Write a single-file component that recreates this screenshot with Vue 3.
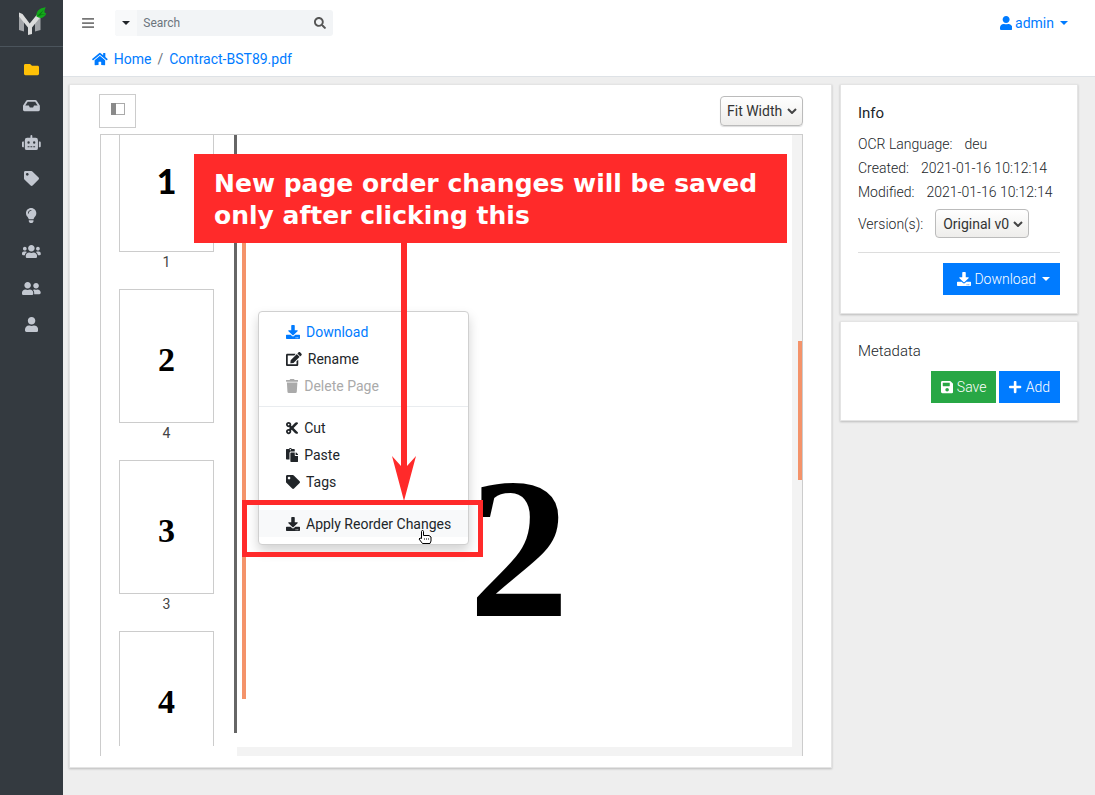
<script setup>
import { ref } from 'vue'

const icons = {
  folder: [512, 'M464 128H272l-64-64H48C21.49 64 0 85.49 0 112v288c0 26.51 21.49 48 48 48h416c26.51 0 48-21.49 48-48V176c0-26.51-21.49-48-48-48z'],
  inbox: [576, 'M567.938 243.908L462.25 85.374A48.003 48.003 0 0 0 422.311 64H153.689a48 48 0 0 0-39.938 21.374L8.062 243.908A47.994 47.994 0 0 0 0 270.533V400c0 26.51 21.49 48 48 48h480c26.51 0 48-21.49 48-48V270.533a47.994 47.994 0 0 0-8.062-26.625zM162.252 128h251.497l85.333 128H376l-32 64H232l-32-64H76.918l85.334-128z'],
  robot: [640, 'M32 224H64V416H32A32 32 0 0 1 0 384V256A32 32 0 0 1 32 224Zm512-48V448a64 64 0 0 1-64 64H160a64 64 0 0 1-64-64V176a80 80 0 0 1 80-80H288V32a32 32 0 0 1 64 0V96H464A80 80 0 0 1 544 176ZM264 256a40 40 0 1 0-40 40A40 40 0 0 0 264 256Zm-8 128H192v32h64Zm96 0H288v32h64ZM456 256a40 40 0 1 0-40 40A40 40 0 0 0 456 256Zm-8 128H384v32h64ZM640 256V384a32 32 0 0 1-32 32H576V224h32A32 32 0 0 1 640 256Z'],
  tag: [512, 'M0 252.118V48C0 21.49 21.49 0 48 0h204.118a48 48 0 0 1 33.941 14.059l211.882 211.882c18.745 18.745 18.745 49.137 0 67.882L293.823 497.941c-18.745 18.745-49.137 18.745-67.882 0L14.059 286.059A48 48 0 0 1 0 252.118zM112 64c-26.51 0-48 21.49-48 48s21.49 48 48 48 48-21.49 48-48-21.49-48-48-48z'],
  bulb: [352, 'M96.06 454.35c.01 6.29 1.87 12.45 5.36 17.69l17.09 25.69a31.99 31.99 0 0 0 26.64 14.28h61.71a31.99 31.99 0 0 0 26.64-14.28l17.09-25.69a31.989 31.989 0 0 0 5.36-17.69l.04-38.35H96.01l.05 38.35zM0 176c0 44.37 16.45 84.85 43.56 115.78 16.52 18.85 42.36 58.23 52.21 91.45.04.26.07.52.11.78h160.24c.04-.26.07-.51.11-.78 9.85-33.22 35.69-72.6 52.21-91.45C335.55 260.85 352 220.37 352 176 352 78.61 272.91-.3 175.45 0 73.44.31 0 82.97 0 176zm176-80c-44.11 0-80 35.89-80 80 0 8.84-7.16 16-16 16s-16-7.16-16-16c0-61.76 50.24-112 112-112 8.84 0 16 7.16 16 16s-7.16 16-16 16z'],
  users: [640, 'M96 224c35.3 0 64-28.7 64-64s-28.7-64-64-64-64 28.7-64 64 28.7 64 64 64zm448 0c35.3 0 64-28.7 64-64s-28.7-64-64-64-64 28.7-64 64 28.7 64 64 64zm32 32h-64c-17.6 0-33.5 7.1-45.1 18.6 40.3 22.1 68.9 62 75.1 109.4h66c17.7 0 32-14.3 32-32v-32c0-35.3-28.7-64-64-64zm-256 0c61.9 0 112-50.1 112-112S381.9 32 320 32 208 82.1 208 144s50.1 112 112 112zm76.8 32h-8.3c-20.8 10-43.9 16-68.5 16s-47.6-6-68.5-16h-8.3C179.6 288 128 339.6 128 403.2V432c0 26.5 21.5 48 48 48h288c26.5 0 48-21.5 48-48v-28.8c0-63.6-51.6-115.2-115.2-115.2zm-223.7-13.4C161.5 263.1 145.6 256 128 256H64c-35.3 0-64 28.7-64 64v32c0 17.7 14.3 32 32 32h65.9c6.3-47.4 34.9-87.3 75.2-109.4z'],
  friends: [640, 'M192 256c61.9 0 112-50.1 112-112S253.9 32 192 32 80 82.1 80 144s50.1 112 112 112zm76.8 32h-8.3c-20.8 10-43.9 16-68.5 16s-47.6-6-68.5-16h-8.3C51.6 288 0 339.6 0 403.2V432c0 26.5 21.5 48 48 48h288c26.5 0 48-21.5 48-48v-28.8c0-63.6-51.6-115.2-115.2-115.2zM480 256c53 0 96-43 96-96s-43-96-96-96-96 43-96 96 43 96 96 96zm48 32h-3.8c-13.9 4.8-28.6 8-44.2 8s-30.3-3.2-44.2-8H432c-20.4 0-39.2 5.9-55.7 15.4 24.4 26.3 39.7 61.2 39.7 99.8v38.4c0 2.2-.5 4.3-.6 6.4H592c26.5 0 48-21.5 48-48 0-61.9-50.1-112-112-112z'],
  user: [448, 'M224 256c70.7 0 128-57.3 128-128S294.7 0 224 0 96 57.3 96 128s57.3 128 128 128zm89.6 32h-16.7c-22.2 10.2-46.9 16-72.9 16s-50.6-5.8-72.9-16h-16.7C60.2 288 0 348.2 0 422.4V464c0 26.5 21.5 48 48 48h352c26.5 0 48-21.5 48-48v-41.6c0-74.2-60.2-134.4-134.4-134.4z'],
  home: [576, 'M280.37 148.26L96 300.11V464a16 16 0 0 0 16 16l112.06-.29a16 16 0 0 0 15.92-16V368a16 16 0 0 1 16-16h64a16 16 0 0 1 16 16v95.64a16 16 0 0 0 16 16.05L464 480a16 16 0 0 0 16-16V300L295.67 148.26a12.19 12.19 0 0 0-15.3 0zM571.6 251.47L488 182.56V44.05a12 12 0 0 0-12-12h-56a12 12 0 0 0-12 12v72.61L318.47 43a48 48 0 0 0-61 0L4.34 251.47a12 12 0 0 0-1.6 16.9l25.5 31A12 12 0 0 0 45.15 301l235.22-193.74a12.19 12.19 0 0 1 15.3 0L530.9 301a12 12 0 0 0 16.9-1.6l25.5-31a12 12 0 0 0-1.7-16.93z'],
  search: [512, 'M505 442.7L405.3 343c-4.5-4.5-10.6-7-17-7H372c27.6-35.3 44-79.7 44-128C416 93.1 322.9 0 208 0S0 93.1 0 208s93.1 208 208 208c48.3 0 92.7-16.4 128-44v16.3c0 6.4 2.5 12.5 7 17l99.7 99.7c9.4 9.4 24.6 9.4 33.9 0l28.3-28.3c9.4-9.4 9.4-24.6.1-34zM208 336c-70.7 0-128-57.2-128-128 0-70.7 57.2-128 128-128 70.7 0 128 57.2 128 128 0 70.7-57.2 128-128 128z'],
  bars: [448, 'M16 76h416a16 16 0 0 1 16 16v30a16 16 0 0 1-16 16H16a16 16 0 0 1-16-16V92a16 16 0 0 1 16-16zM16 226h416a16 16 0 0 1 16 16v30a16 16 0 0 1-16 16H16a16 16 0 0 1-16-16v-30a16 16 0 0 1 16-16zM16 376h416a16 16 0 0 1 16 16v30a16 16 0 0 1-16 16H16a16 16 0 0 1-16-16v-30a16 16 0 0 1 16-16z'],
  download: [512, 'M216 0h80c13.3 0 24 10.7 24 24v168h87.7c17.8 0 26.7 21.5 14.1 34.1L269.7 378.3c-7.5 7.5-19.8 7.5-27.3 0L90.1 226.1c-12.6-12.6-3.7-34.1 14.1-34.1H192V24c0-13.3 10.7-24 24-24zm296 376v112c0 13.3-10.7 24-24 24H24c-13.3 0-24-10.7-24-24V376c0-13.3 10.7-24 24-24h146.7l49 49c20.1 20.1 52.5 20.1 72.6 0l49-49H488c13.3 0 24 10.7 24 24zm-124 88c0-11-9-20-20-20s-20 9-20 20 9 20 20 20 20-9 20-20zm64 0c0-11-9-20-20-20s-20 9-20 20 9 20 20 20 20-9 20-20z'],
  edit: [576, 'M402.6 83.2l90.2 90.2c3.8 3.8 3.8 10 0 13.8L274.4 405.6l-92.8 10.3c-12.4 1.4-22.9-9.1-21.5-21.5l10.3-92.8L388.8 83.2c3.8-3.8 10-3.8 13.8 0zm162-22.9l-48.8-48.8c-15.2-15.2-39.9-15.2-55.2 0l-35.4 35.4c-3.8 3.8-3.8 10 0 13.8l90.2 90.2c3.8 3.8 10 3.8 13.8 0l35.4-35.4c15.2-15.3 15.2-40 0-55.2zM384 346.2V448H64V128h229.8c3.2 0 6.2-1.3 8.5-3.5l40-40c7.6-7.6 2.2-20.5-8.5-20.5H48C21.5 64 0 85.5 0 112v352c0 26.5 21.5 48 48 48h352c26.5 0 48-21.5 48-48V306.2c0-10.7-12.9-16-20.5-8.5l-40 40c-2.2 2.3-3.5 5.3-3.5 8.5z'],
  trash: [448, 'M432 32H312l-9.4-18.7A24 24 0 0 0 281.1 0H166.8a23.72 23.72 0 0 0-21.4 13.3L136 32H16A16 16 0 0 0 0 48v32a16 16 0 0 0 16 16h416a16 16 0 0 0 16-16V48a16 16 0 0 0-16-16zM53.2 467a48 48 0 0 0 47.9 45h245.8a48 48 0 0 0 47.9-45L416 128H32z'],
  cut: [448, 'M278.06 256L444.48 89.57c4.69-4.69 4.69-12.29 0-16.97-32.8-32.8-85.99-32.8-118.79 0L210.18 188.12l-24.86-24.86c4.31-10.92 6.68-22.81 6.68-35.26 0-53.02-42.98-96-96-96S0 74.98 0 128s42.98 96 96 96c4.54 0 8.99-.32 13.36-.93L142.29 256l-32.93 32.93c-4.37-.61-8.83-.93-13.36-.93-53.02 0-96 42.98-96 96s42.98 96 96 96 96-42.98 96-96c0-12.45-2.37-24.34-6.68-35.26l24.86-24.86L325.69 439.4c32.8 32.8 85.99 32.8 118.79 0 4.69-4.68 4.69-12.28 0-16.97L278.06 256zM96 160c-17.64 0-32-14.36-32-32s14.36-32 32-32 32 14.36 32 32-14.36 32-32 32zm0 256c-17.64 0-32-14.36-32-32s14.36-32 32-32 32 14.36 32 32-14.36 32-32 32z'],
  paste: [448, 'M128 184c0-30.879 25.122-56 56-56h136V56c0-13.255-10.745-24-24-24h-80.61C204.306 12.89 183.637 0 160 0s-44.306 12.89-55.39 32H24C10.745 32 0 42.745 0 56v336c0 13.255 10.745 24 24 24h104V184zm32-144c13.255 0 24 10.745 24 24s-10.745 24-24 24-24-10.745-24-24 10.745-24 24-24zm184 248h104v200c0 13.255-10.745 24-24 24H184c-13.255 0-24-10.745-24-24V184c0-13.255 10.745-24 24-24h136v104c0 13.2 10.8 24 24 24zm104-38.059V256h-96v-96h6.059a24 24 0 0 1 16.97 7.029l65.941 65.941a24.002 24.002 0 0 1 7.03 16.971z'],
  save: [448, 'M433.941 129.941l-83.882-83.882A48 48 0 0 0 316.118 32H48C21.49 32 0 53.49 0 80v352c0 26.51 21.49 48 48 48h352c26.51 0 48-21.49 48-48V163.882a48 48 0 0 0-14.059-33.941zM224 416c-35.346 0-64-28.654-64-64 0-35.346 28.654-64 64-64s64 28.654 64 64c0 35.346-28.654 64-64 64zm96-304.52V212c0 6.627-5.373 12-12 12H76c-6.627 0-12-5.373-12-12V108c0-6.627 5.373-12 12-12h228.52c3.183 0 6.235 1.264 8.485 3.515l3.48 3.48A11.996 11.996 0 0 1 320 111.48z'],
  plus: [448, 'M416 208H272V64c0-17.67-14.33-32-32-32h-32c-17.67 0-32 14.33-32 32v144H32c-17.67 0-32 14.33-32 32v32c0 17.67 14.33 32 32 32h144v144c0 17.67 14.33 32 32 32h32c17.67 0 32-14.33 32-32V304h144c17.67 0 32-14.33 32-32v-32c0-17.67-14.33-32-32-32z'],
}
const box = (name) => `0 0 ${icons[name][0]} 512`

const nav = [
  { icon: 'folder', label: 'Documents', active: true },
  { icon: 'inbox', label: 'Inbox' },
  { icon: 'robot', label: 'Automates' },
  { icon: 'tag', label: 'Tags' },
  { icon: 'bulb', label: 'Logs' },
  { icon: 'users', label: 'Groups' },
  { icon: 'friends', label: 'Roles' },
  { icon: 'user', label: 'Users' },
]
const menu = [
  [
    { icon: 'download', label: 'Download', kind: 'primary' },
    { icon: 'edit', label: 'Rename' },
    { icon: 'trash', label: 'Delete Page', disabled: true },
  ],
  [
    { icon: 'cut', label: 'Cut' },
    { icon: 'paste', label: 'Paste' },
    { icon: 'tag', label: 'Tags' },
  ],
  [{ icon: 'download', label: 'Apply Reorder Changes', kind: 'hovered' }],
]
const thumbs = [
  { digit: '1', page: '1', sans: true },
  { digit: '2', page: '4' },
  { digit: '3', page: '3' },
  { digit: '4' },
]
const query = ref('')
const zoom = ref('Fit Width')
const version = ref('Original v0')
</script>

<template>
  <div class="app">
    <aside class="sidebar">
      <a class="brand" href="#" aria-label="Start page">
        <svg class="logo" viewBox="0 0 30 30">
          <path fill="#a2a5a9" d="M2 7l5 6v11.500L2 23zM18 13l5.500-6v16L18 24.500z" />
          <path fill="#dcdddd" d="M2 5.500l3.500 1.500 7.200 9.500L20 7.500l3.500-1v3.500L15 20.500V27l-4 1v-7.500L2 9.500z" />
          <path fill="#12a81a" d="M19.500 9.500c-.5-5 2.500-8.500 9.300-9.300-1.500 2.500-1.300 4.300-1.300 5.300l1.800 1.300c-2 4.500-6.500 5.200-9.800 2.700z" />
          <path fill="#0b7412" d="M20 9.300L27 2.500l-3.500 5 5.500-.5z" />
        </svg>
      </a>
      <nav class="nav">
        <a v-for="n in nav" :key="n.label" href="#" :class="{ active: n.active }" :aria-label="n.label">
          <svg class="icon nav-icon" :viewBox="box(n.icon)"><path :d="icons[n.icon][1]" /></svg>
        </a>
      </nav>
    </aside>

    <div class="body">
      <header class="header">
        <div class="topbar">
          <button class="plain burger" aria-label="Toggle sidebar">
            <svg class="icon" :viewBox="box('bars')"><path :d="icons.bars[1]" /></svg>
          </button>
          <form class="search" @submit.prevent>
            <button class="plain scope" type="button" aria-label="Search options"><span class="caret"></span></button>
            <input v-model="query" type="text" placeholder="Search" aria-label="Search" />
            <button class="plain go" aria-label="Run search">
              <svg class="icon" :viewBox="box('search')"><path :d="icons.search[1]" /></svg>
            </button>
          </form>
          <button class="plain account">
            <svg class="icon" :viewBox="box('user')"><path :d="icons.user[1]" /></svg>
            <span>admin</span><span class="caret"></span>
          </button>
        </div>
        <nav class="crumbs" aria-label="Breadcrumb">
          <a href="#"><svg class="icon" :viewBox="box('home')"><path :d="icons.home[1]" /></svg>Home</a>
          <span class="slash">/</span>
          <a href="#">Contract-BST89.pdf</a>
        </nav>
      </header>

      <main class="main">
        <section class="card document">
          <div class="toolbar">
            <button class="panel-toggle" aria-label="Toggle thumbnails">
              <svg viewBox="0 0 14 12"><rect x=".5" y=".5" width="13" height="11" fill="#fff" stroke="#aaa" /><path d="M0 0h5v12H0z" fill="#8a8a8a" /></svg>
            </button>
            <span class="select-wrap">
              <select v-model="zoom" class="zoom" aria-label="Zoom"><option>Fit Width</option></select>
              <svg class="chevron" viewBox="0 0 10 6"><path d="M1 1l4 4 4-4" /></svg>
            </span>
          </div>

          <div class="viewer">
            <div class="thumb-pane">
              <figure v-for="t in thumbs" :key="t.digit" class="thumb">
                <div class="sheet" :class="{ sans: t.sans }">{{ t.digit }}</div>
                <figcaption v-if="t.page">{{ t.page }}</figcaption>
              </figure>
            </div>
            <div class="splitter"></div>
            <div class="page-pane">
              <div class="page-row">
                <div class="marker"></div>
                <div class="page"><span class="page-digit">2</span></div>
                <div class="track"><div class="track-thumb"></div></div>
              </div>
              <div class="track-h"></div>
            </div>

            <ul class="menu">
              <template v-for="(group, g) in menu" :key="g">
                <li v-if="g" class="divider" role="separator"></li>
                <li v-for="m in group" :key="m.label">
                  <button class="plain item" :class="m.kind" :disabled="m.disabled">
                    <svg class="icon" :viewBox="box(m.icon)"><path :d="icons[m.icon][1]" /></svg>{{ m.label }}
                  </button>
                </li>
              </template>
            </ul>

            <div class="callout">New page order changes will be saved<br />only after clicking this</div>
            <svg class="arrow" viewBox="0 0 26 260">
              <path d="M10 0h6v224l9-10-12 45L1 214l9 10z" />
            </svg>
            <div class="highlight"></div>
            <svg class="pointer" viewBox="0 0 14 14">
              <path d="M3.500 8.500V1.500a1 1 0 0 1 2 0V5.500h5.500l2 1.500v4l-1 2.500H4.500L1 9l1-1z" fill="#fff" stroke="#000" />
              <path d="M6.500 8.500v1M8.500 8.500v1M10.500 8.500v1" stroke="#000" />
            </svg>
          </div>
        </section>

        <div class="side">
          <section class="card info">
            <h2>Info</h2>
            <dl>
              <div><dt>OCR Language:</dt><dd>deu</dd></div>
              <div><dt>Created:</dt><dd>2021-01-16 10:12:14</dd></div>
              <div><dt>Modified:</dt><dd>2021-01-16 10:12:14</dd></div>
            </dl>
            <div class="version-row">
              <label for="version">Version(s):</label>
              <span class="select-wrap">
                <select id="version" v-model="version" class="version"><option>Original v0</option></select>
                <svg class="chevron" viewBox="0 0 10 6"><path d="M1 1l4 4 4-4" /></svg>
              </span>
            </div>
            <hr />
            <div class="actions">
              <button class="btn blue wide">
                <svg class="icon" :viewBox="box('download')"><path :d="icons.download[1]" /></svg>Download<span class="caret"></span>
              </button>
            </div>
          </section>
          <section class="card meta">
            <h2>Metadata</h2>
            <div class="actions">
              <button class="btn green"><svg class="icon" :viewBox="box('save')"><path :d="icons.save[1]" /></svg>Save</button>
              <button class="btn blue"><svg class="icon" :viewBox="box('plus')"><path :d="icons.plus[1]" /></svg>Add</button>
            </div>
          </section>
        </div>
      </main>
    </div>
  </div>
</template>

<style>
body {
  margin: 0;
  background: #eee;
}
</style>

<style scoped>
* {
  box-sizing: border-box;
}
.app {
  display: flex;
  min-height: 100vh;
  font: 400 14px/20px Roboto, sans-serif;
  color: #212529;
}
a {
  color: #007bff;
  text-decoration: none;
}
button,
select,
input {
  font: inherit;
  color: inherit;
}
button {
  cursor: pointer;
}
.plain {
  border: 0;
  background: none;
  padding: 0;
}
.icon {
  display: block;
  flex: none;
  height: 14px;
  fill: currentColor;
}
.caret {
  border: 4px solid transparent;
  border-top-color: currentColor;
  border-bottom: 0;
}

.sidebar {
  flex: none;
  width: 63px;
  background: #343a40;
}
.brand {
  display: flex;
  justify-content: center;
  height: 47px;
  padding-top: 7px;
  border-bottom: 1px solid #4b545c;
}
.logo {
  width: 30px;
  height: 30px;
}
.nav {
  display: grid;
  grid-auto-rows: 36px;
  align-content: space-between;
  height: 296px;
  padding-top: 4px;
}
.nav a {
  display: flex;
  align-items: center;
  justify-content: center;
  color: #c2c7d0;
}
.nav a.active {
  color: #ffc107;
}
.nav-icon {
  height: 15px;
}

.body {
  display: flex;
  flex: 1;
  flex-direction: column;
  min-width: 0;
}
.header {
  height: 77px;
  background: #fff;
  border-bottom: 1px solid #dee2e6;
}
.topbar {
  display: flex;
  align-items: center;
  height: 45px;
  padding: 0 27px 0 19px;
}
.burger {
  margin-right: 21px;
  color: #777;
}
.search {
  display: flex;
  width: 218px;
  height: 26px;
  border-radius: 3px;
  background: #f2f4f6;
  overflow: hidden;
}
.scope {
  display: grid;
  place-items: center;
  width: 22px;
  background: #f8f9fa;
}
.search input {
  flex: 1;
  min-width: 0;
  padding: 0 6px;
  border: 0;
  outline: 0;
  background: none;
  font-size: 12px;
}
.search input::placeholder {
  color: #6c757d;
  opacity: 1;
}
.go {
  padding: 0 7px;
  color: #555;
}
.go .icon {
  height: 12px;
}
.account {
  display: flex;
  align-items: center;
  gap: 3px;
  margin-left: auto;
  color: #007bff;
}
.account .caret {
  margin-left: 3px;
}
.crumbs {
  display: flex;
  align-items: center;
  gap: 6px;
  padding: 4px 29px;
}
.crumbs a {
  display: flex;
  align-items: center;
  gap: 6px;
}
.slash {
  color: #6c757d;
}

.main {
  display: flex;
  flex: 1;
  gap: 8px;
  padding: 7px 17px 27px 6px;
}
.card {
  background: #fff;
  border: 1px solid #e4e4e4;
  box-shadow: 0 1px 2px #bbb;
}
.document {
  display: flex;
  flex: 1;
  flex-direction: column;
  min-width: 0;
  padding: 9px 28px 11px 29px;
}
.toolbar {
  display: flex;
  align-items: center;
  justify-content: space-between;
  height: 34px;
  margin-bottom: 6px;
}
.panel-toggle {
  display: grid;
  place-items: center;
  width: 37px;
  height: 34px;
  padding: 0 0 4px;
  border: 1px solid #ccc;
  background: #fff;
}
.panel-toggle svg {
  width: 14px;
  height: 12px;
}
.select-wrap {
  position: relative;
  display: inline-flex;
}
select {
  appearance: none;
  border: 1px solid #bbb;
  border-radius: 4px;
  background: linear-gradient(#fff, #eeedeb);
  outline: 0;
  color: #333;
}
.zoom {
  width: 83px;
  height: 30px;
  padding: 0 6px;
  box-shadow: 0 1px 1px #ddd;
}
.version {
  width: 94px;
  height: 29px;
  padding: 0 7px;
}
.chevron {
  position: absolute;
  top: 12px;
  right: 6px;
  width: 10px;
  height: 6px;
  fill: none;
  stroke: #444;
  stroke-width: 2;
  pointer-events: none;
}

.viewer {
  position: relative;
  display: flex;
  flex: 1;
  min-height: 622px;
  margin-left: 1px;
  border: 1px solid #ccc;
  border-bottom: 0;
}
.thumb-pane {
  display: flex;
  flex-direction: column;
  align-items: center;
  width: 133px;
  height: 611px;
  padding-right: 2px;
  overflow: hidden;
}
.thumb {
  flex: none;
  margin: 0 0 17px;
  text-align: center;
}
.thumb:first-child {
  margin-top: -17px;
}
.sheet {
  display: grid;
  place-items: center;
  width: 95px;
  height: 134px;
  padding-top: 8px;
  border: 1px solid #ccc;
  color: #000;
  font: 700 34px/40px "Liberation Serif", serif;
}
.sheet.sans {
  padding: 0 0 8px;
  font-family: Lato, sans-serif;
  font-weight: 900;
}
figcaption {
  color: #444;
}
.splitter {
  width: 3px;
  margin-bottom: 23px;
  background: #666;
}
.page-pane {
  display: flex;
  flex: 1;
  flex-direction: column;
  min-width: 0;
}
.page-row {
  display: flex;
  flex: 1;
}
.marker {
  width: 4px;
  margin: 65px 0 48px 5px;
  background: #f4936a;
}
.page {
  display: flex;
  flex: 1;
  align-items: center;
  justify-content: center;
  padding-top: 214px;
}
.page-digit {
  color: #000;
  font: 700 202px/200px "Liberation Serif", serif;
}
.track {
  width: 10px;
  padding: 206px 0 0 6px;
  background: #f3f3f3;
}
.track-thumb {
  height: 139px;
  background: #f4936a;
}
.track-h {
  height: 9px;
  background: #f3f3f3;
}

.menu {
  position: absolute;
  top: 176px;
  left: 157px;
  width: 211px;
  margin: 0;
  padding: 6px 0 7px;
  border: 1px solid #d0d0d0;
  border-radius: 4px;
  background: #fff;
  box-shadow: 0 6px 12px #0000002d;
  list-style: none;
}
.item {
  display: flex;
  align-items: center;
  gap: 6px;
  width: 100%;
  height: 27px;
  padding: 0 27px;
  white-space: nowrap;
}
.item.primary {
  color: #007bff;
}
.item:disabled {
  color: #aaa;
}
.item.hovered {
  background: #f8f9fa;
}
.divider {
  height: 1px;
  margin: 7px 0;
  background: #e9ecef;
}
.callout {
  position: absolute;
  top: 19px;
  left: 93px;
  width: 593px;
  height: 89px;
  padding: 14px 20px;
  background: #ff2a2a;
  color: #fff;
  font: 700 25px/32px "DejaVu Sans", sans-serif;
  white-space: nowrap;
}
.arrow {
  position: absolute;
  top: 107px;
  left: 290px;
  width: 26px;
  height: 260px;
  fill: #ff2a2a;
}
.highlight {
  position: absolute;
  top: 365px;
  left: 141px;
  width: 241px;
  height: 57px;
  border: 5px solid #ff2a2a;
}
.pointer {
  position: absolute;
  top: 395px;
  left: 317px;
  width: 14px;
  height: 14px;
}

.side {
  flex: none;
  width: 238px;
}
.info,
.meta {
  padding: 18px 17px;
  font-weight: 300;
}
.info {
  height: 230px;
  margin-bottom: 7px;
}
.meta {
  height: 100px;
}
h2 {
  margin: 0 0 9px;
  font-size: 15px;
  font-weight: 400;
  line-height: 20px;
}
.meta h2 {
  margin-bottom: 10px;
  padding-top: 1px;
  font-weight: 300;
}
dl {
  margin: 0;
}
dl div {
  display: flex;
  gap: 12px;
  line-height: 24px;
}
dl dd {
  margin: 0;
}
.version-row {
  display: flex;
  align-items: center;
  gap: 12px;
  margin-top: 5px;
}
.version-row select {
  font-weight: 400;
}
hr {
  margin: 14px 0 10px;
  border: 0;
  border-top: 1px solid #ddd;
}
.actions {
  display: flex;
  justify-content: flex-end;
  gap: 3px;
}
.btn {
  display: flex;
  align-items: center;
  gap: 4px;
  height: 32px;
  padding: 0 10px;
  border: 0;
  color: #fff;
}
.btn.wide {
  padding: 0 10px 0 14px;
  gap: 3px;
}
.btn .caret {
  margin-left: 3px;
}
.blue {
  background: #007bff;
}
.green {
  background: #28a745;
}
</style>
